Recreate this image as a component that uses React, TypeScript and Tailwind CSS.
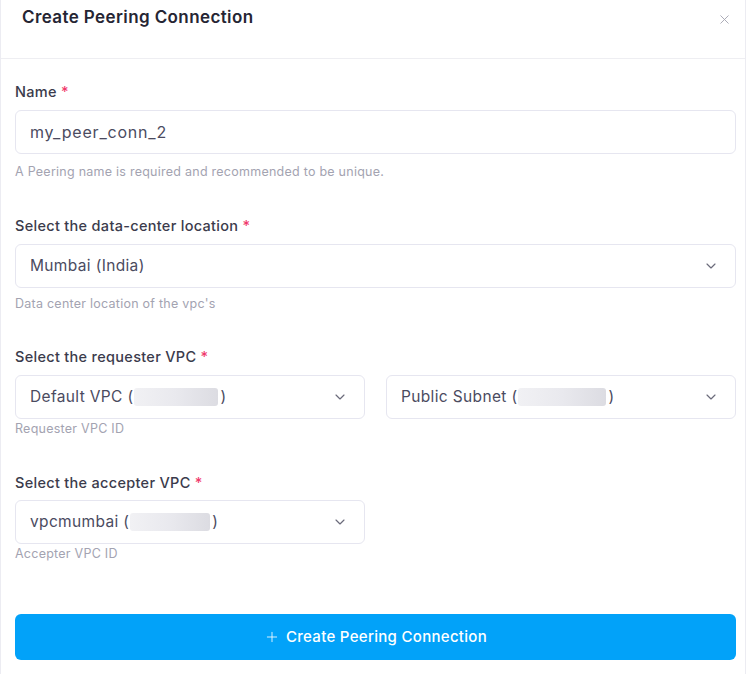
import React from 'react'
import { ChevronDown, X, Plus } from 'lucide-react'

const font = { fontFamily: 'Inter, "Open Sans", sans-serif' }

function Label({ children }: { children: React.ReactNode }) {
  return (
    <label className="block text-[14.5px] font-medium text-[#3b3b4c] leading-5 tracking-[0.3px]">
      {children} <span className="text-[#f0386b]">*</span>
    </label>
  )
}

function Help({ children, className = '' }: { children: React.ReactNode; className?: string }) {
  return <p className={`text-[12.5px] text-[#a3a3b1] tracking-[0.25px] leading-5 ${className}`}>{children}</p>
}

function Blur({ w }: { w: number }) {
  return (
    <span
      className="inline-block h-[18px] rounded-[3px] bg-gradient-to-r from-[#f1f1f4] via-[#e9e9ee] to-[#dcdce2] align-middle ml-[1px] mr-[2px]"
      style={{ width: w }}
    />
  )
}

function Select({ children }: { children: React.ReactNode }) {
  return (
    <div className="flex h-11 items-center justify-between rounded-md border border-[#e6e6f0] bg-white pl-[14px] pr-[16px]">
      <span className="text-[15.5px] text-[#4b4b5f] tracking-[0.35px] flex items-center">{children}</span>
      <ChevronDown size={16} strokeWidth={1.75} className="text-[#6b6b7b]" />
    </div>
  )
}

export default function App() {
  return (
    <div className="w-[746px] h-[674px] bg-white border-x border-[#ececf2] overflow-hidden" style={font}>
      <div className="flex justify-between h-[59px] border-b border-[#eeeef2] pl-[21px] pr-[13px]">
        <h1 className="pt-[5px] text-[17px] font-semibold text-[#252533] tracking-[0.4px]">
          Create Peering Connection
        </h1>
        <X size={15} strokeWidth={1.5} className="mt-[12px] text-[#a6a6b3]" />
      </div>

      <div className="pl-[14px] pr-[9px]">
        <div className="pt-[23px]">
          <Label>Name</Label>
          <div className="mt-[8px] flex h-11 items-center rounded-md border border-[#e6e6f0] pl-[14px]">
            <span className="text-[16px] text-[#4b4b5f] tracking-[0.8px]">my_peer_conn_2</span>
          </div>
          <Help className="mt-[8px]">A Peering name is required and recommended to be unique.</Help>
        </div>

        <div className="pt-[34px]">
          <Label>Select the data-center location</Label>
          <div className="mt-[8px]">
            <Select>Mumbai (India)</Select>
          </div>
          <Help className="mt-[6px]">Data center location of the vpc's</Help>
        </div>

        <div className="pt-[33px]">
          <Label>Select the requester VPC</Label>
          <div className="mt-[8px] grid grid-cols-2 gap-[21px]">
            <Select>
              Default VPC (<Blur w={84} />)
            </Select>
            <Select>
              Public Subnet (<Blur w={88} />)
            </Select>
          </div>
          <Help>Requester VPC ID</Help>
        </div>

        <div className="pt-[34px]">
          <Label>Select the accepter VPC</Label>
          <div className="mt-[7px] w-[350px]">
            <Select>
              vpcmumbai (<Blur w={80} />)
            </Select>
          </div>
          <Help>Accepter VPC ID</Help>
        </div>

        <button className="mt-[50px] flex h-[46px] w-full items-center justify-center gap-[6px] rounded-md bg-[#02a2f9] text-[15px] font-medium text-white tracking-[0.3px]">
          <Plus size={16} strokeWidth={1.25} />
          Create Peering Connection
        </button>
      </div>
    </div>
  )
}
